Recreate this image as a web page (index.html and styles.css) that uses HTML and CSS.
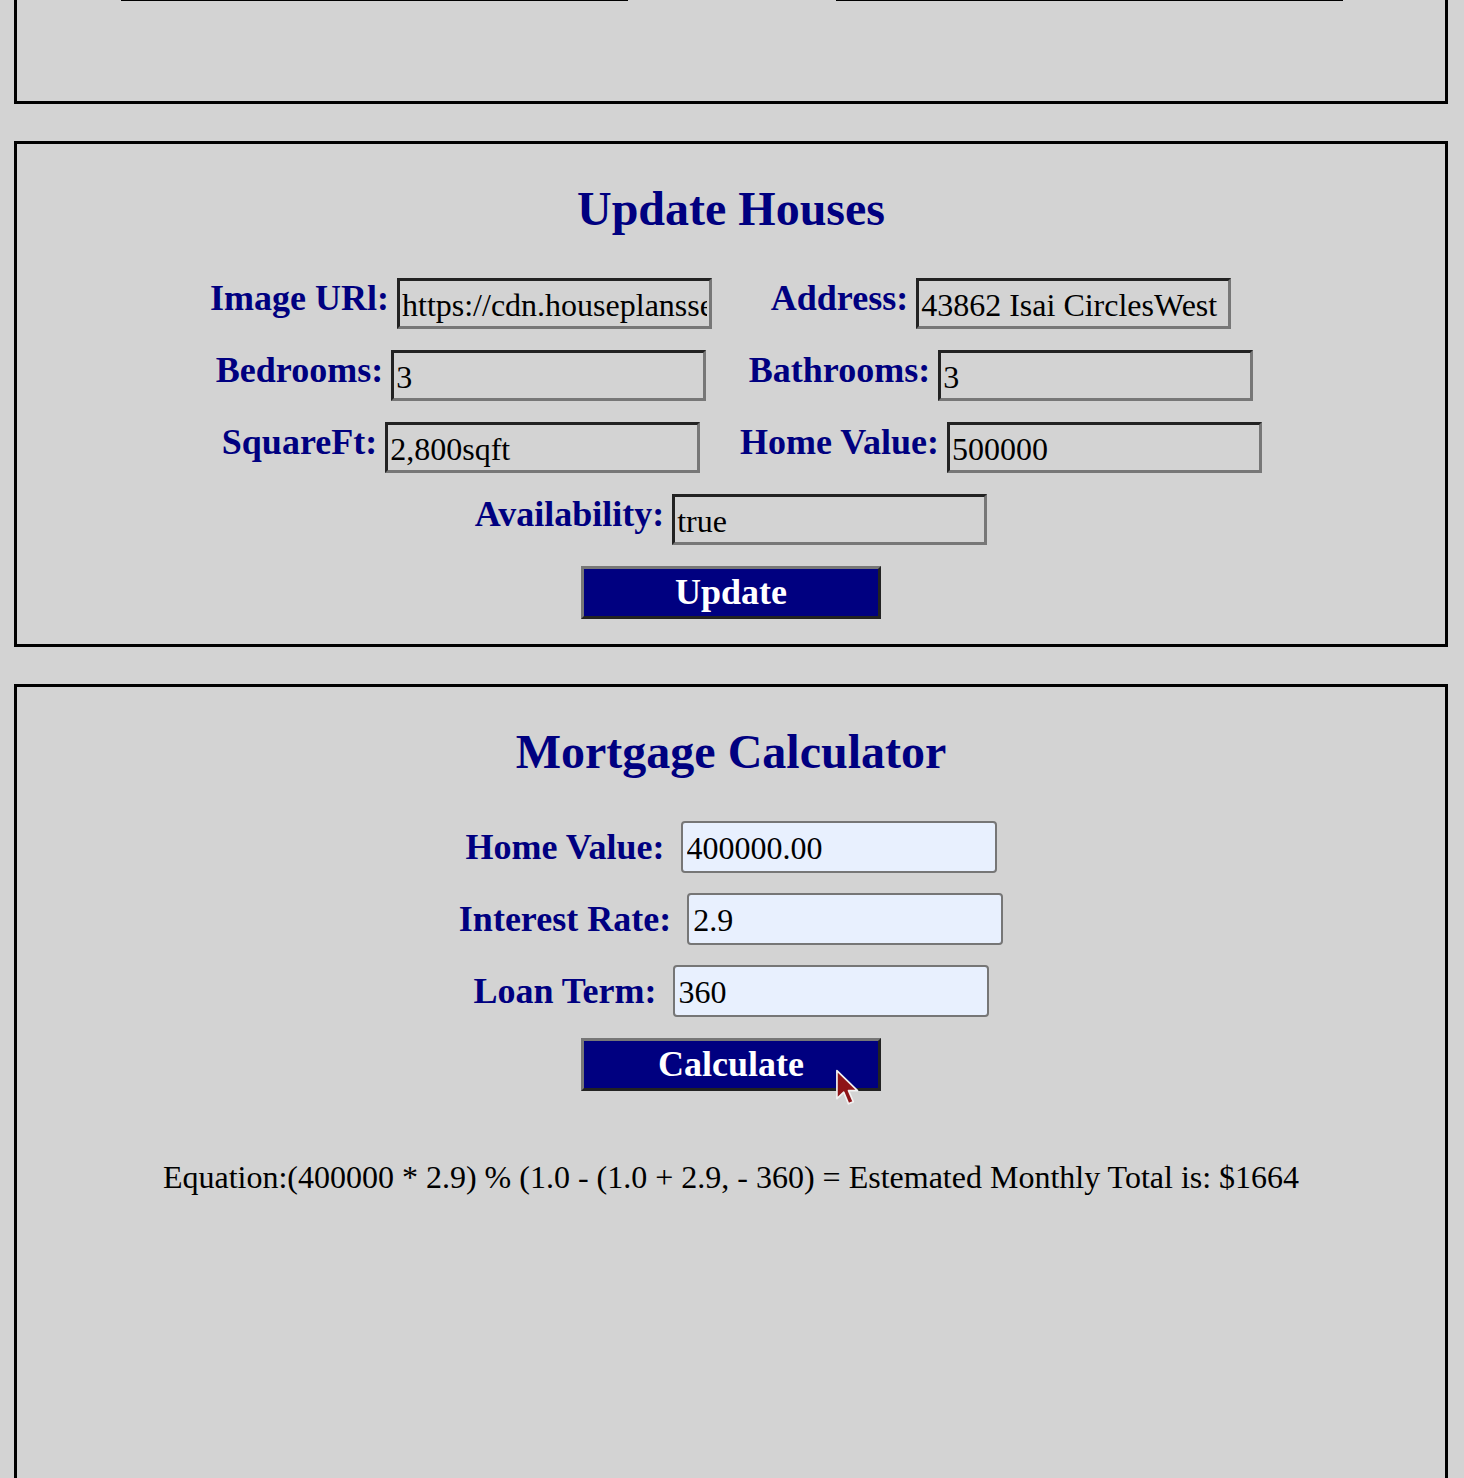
FILE: index.html
```html
<!DOCTYPE html>
<html lang="en">
<head>
<meta charset="utf-8">
<title>Houses</title>
<link rel="stylesheet" href="styles.css">
</head>
<body>
  <section class="panel panel-top">
    <div class="card-row">
      <div class="card-edge"></div>
      <div class="card-edge"></div>
    </div>
  </section>

  <section class="panel panel-update">
    <h2 class="panel-title">Update Houses</h2>
    <div class="grid">
      <div class="field"><label class="lbl">Image URl:</label><input class="inp" type="text" value="https://cdn.houseplansservices.com/content/image.jpg"></div>
      <div class="field"><label class="lbl">Address:</label><input class="inp" type="text" value="43862 Isai CirclesWest"></div>
      <div class="field"><label class="lbl">Bedrooms:</label><input class="inp" type="text" value="3"></div>
      <div class="field"><label class="lbl">Bathrooms:</label><input class="inp" type="text" value="3"></div>
      <div class="field"><label class="lbl">SquareFt:</label><input class="inp" type="text" value="2,800sqft"></div>
      <div class="field"><label class="lbl">Home Value:</label><input class="inp" type="text" value="500000"></div>
    </div>
    <div class="field field-single"><label class="lbl">Availability:</label><input class="inp" type="text" value="true"></div>
    <div class="btn-row"><button class="btn" type="button">Update</button></div>
  </section>

  <section class="panel panel-mortgage">
    <h2 class="panel-title">Mortgage Calculator</h2>
    <div class="m-field"><label class="m-lbl">Home Value:</label><input class="m-inp" type="text" value="400000.00"></div>
    <div class="m-field"><label class="m-lbl">Interest Rate:</label><input class="m-inp" type="text" value="2.9"></div>
    <div class="m-field"><label class="m-lbl">Loan Term:</label><input class="m-inp" type="text" value="360"></div>
    <div class="btn-row btn-row-calc">
      <div class="btn-wrap">
        <button class="btn" type="button">Calculate</button>
        <svg class="cursor" width="26" height="38" viewBox="0 0 24 36" aria-hidden="true">
          <path d="M1.5 1.5 L1.5 28 L8 22 L12.5 33 L17 31 L12.5 20.5 L21 20.5 Z" fill="#8e1418" stroke="#f2f2f2" stroke-width="1.6" stroke-linejoin="round"/>
        </svg>
      </div>
    </div>
    <p class="equation">Equation:(400000 * 2.9) % (1.0 - (1.0 + 2.9, - 360) = Estemated Monthly Total is: $1664</p>
  </section>
</body>
</html>
```

FILE: styles.css
```css
html, body {
  background: #d3d3d3;
}
body {
  margin: 0 16px 0 14px;
  font-family: "Liberation Serif", "Times New Roman", serif;
  color: #000;
}

.panel {
  border: 3px solid #000;
  box-sizing: border-box;
}

.panel-top {
  border-top: none;
  height: 104px;
}
.card-row {
  display: flex;
  justify-content: center;
  gap: 208px;
  padding-left: 1px;
}
.card-edge {
  width: 507px;
  height: 0;
  border-bottom: 1px solid #000;
}

.panel-update {
  margin-top: 37px;
  padding-bottom: 25px;
}

.panel-title {
  margin: 37px 0 0;
  font-size: 48px;
  line-height: 56px;
  font-weight: bold;
  color: #000080;
  text-align: center;
}

.grid {
  width: 1080px;
  margin: 41px auto 0;
  display: grid;
  grid-template-columns: 540px 540px;
  row-gap: 21px;
}

.field {
  display: flex;
  justify-content: center;
  align-items: flex-start;
  gap: 8px;
}
.field-single {
  margin-top: 21px;
}

.lbl {
  font-size: 36px;
  line-height: 40px;
  font-weight: bold;
  color: #000080;
  white-space: nowrap;
}

.inp {
  box-sizing: border-box;
  width: 315px;
  height: 51px;
  margin: 0;
  padding: 3px 2px 0;
  border-style: solid;
  border-width: 3px;
  border-color: #222 #777 #777 #222;
  background: transparent;
  font-family: "Liberation Serif", "Times New Roman", serif;
  font-size: 32px;
  color: #000;
  outline: none;
}

.btn-row {
  display: flex;
  justify-content: center;
  margin-top: 21px;
}
.btn-wrap {
  position: relative;
}
.btn {
  box-sizing: border-box;
  width: 300px;
  height: 53px;
  margin: 0;
  padding: 0;
  border-style: solid;
  border-width: 3px;
  border-color: #777 #222 #222 #777;
  background: #000080;
  color: #fff;
  font-family: "Liberation Serif", "Times New Roman", serif;
  font-size: 36px;
  line-height: 41px;
  font-weight: bold;
  cursor: pointer;
}

.panel-mortgage {
  margin-top: 37px;
  padding-bottom: 300px;
}
.panel-mortgage .panel-title {
  margin-bottom: 41px;
}

.m-field {
  display: flex;
  justify-content: center;
  align-items: baseline;
  gap: 16px;
  margin-top: 20px;
}
.panel-mortgage .panel-title + .m-field {
  margin-top: 0;
}

.m-lbl {
  font-size: 36px;
  font-weight: bold;
  color: #000080;
  white-space: nowrap;
}

.m-inp {
  box-sizing: border-box;
  width: 316px;
  height: 52px;
  margin: 0;
  padding: 2px 4px 0;
  border: 2px solid #767676;
  border-radius: 4px;
  background: #e8f0fe;
  font-family: "Liberation Serif", "Times New Roman", serif;
  font-size: 32px;
  color: #000;
  outline: none;
}

.btn-row-calc {
  margin-top: 21px;
}

.cursor {
  position: absolute;
  left: 254px;
  top: 31px;
  pointer-events: none;
}

.equation {
  margin: 66px 0 0;
  font-size: 32px;
  line-height: 40px;
  text-align: center;
}
```
